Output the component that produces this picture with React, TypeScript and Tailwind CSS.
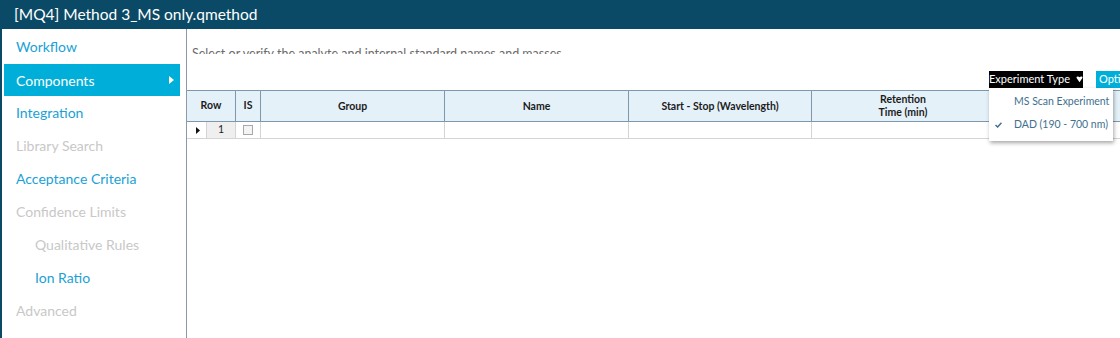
import React from "react";

type NavItem = { label: string; state: "link" | "active" | "disabled"; indent?: boolean };

const nav: NavItem[] = [
  { label: "Workflow", state: "link" },
  { label: "Components", state: "active" },
  { label: "Integration", state: "link" },
  { label: "Library Search", state: "disabled" },
  { label: "Acceptance Criteria", state: "link" },
  { label: "Confidence Limits", state: "disabled" },
  { label: "Qualitative Rules", state: "disabled", indent: true },
  { label: "Ion Ratio", state: "link", indent: true },
  { label: "Advanced", state: "disabled" },
  { label: "Formula Finder", state: "disabled", indent: true },
];

const cols = [
  { label: "Group", w: "w-[184px]" },
  { label: "Name", w: "w-[184px]" },
  { label: "Start - Stop (Wavelength)", w: "w-[183px]" },
  { label: "Retention\nTime (min)", w: "w-[183px]" },
  { label: "", w: "w-[184px]" },
];

function Caret() {
  return (
    <svg width="8" height="7" viewBox="0 0 8 7" className="ml-[6px]">
      <path d="M0.5 1.5 Q0.5 0 2 0 Q3.3 0 4 1 Q4.7 0 6 0 Q7.5 0 7.5 1.5 L4 6.5 Z" fill="white" />
    </svg>
  );
}

export default function App() {
  return (
    <div className="w-[1120px] h-[338px] overflow-hidden bg-white" style={{ fontFamily: "Lato, 'Liberation Sans', sans-serif" }}>
      {/* Title bar */}
      <div className="h-[29px] bg-[#0b4a66] text-white text-[15.5px] pl-[14px] flex items-center leading-none">
        [MQ4] Method 3_MS only.qmethod
      </div>

      <div className="flex h-[309px] border-l-2 border-[#0b4a66]">
        {/* Left navigation */}
        <nav className="w-[185px] shrink-0 border-r border-[#8c99a6] pt-px pl-[2px] pr-[6px]">
          {nav.map((n) => (
            <div
              key={n.label}
              className={`flex items-center text-[14px] ${n.indent ? "pl-[31px]" : "pl-[12px]"} ${
                n.state === "active"
                  ? "bg-[#00afd9] text-white mt-px h-[32px] justify-between pr-[6px]"
                  : n.state === "link"
                  ? "h-[33px] text-[#1ba1d5]"
                  : "h-[33px] text-[#c8c8c8]"
              }`}
            >
              <span>{n.label}</span>
              {n.state === "active" && (
                <svg width="5" height="8" viewBox="0 0 5 8">
                  <path d="M0 0 L5 4 L0 8 Z" fill="white" />
                </svg>
              )}
            </div>
          ))}
        </nav>

        {/* Main */}
        <main className="relative flex-1 overflow-hidden">
          <div className="h-[25px] overflow-hidden pl-[5px] pt-[18px] text-[12.5px] leading-[14px] text-[#6b6b6b] whitespace-nowrap">
            Select or verify the analyte and internal standard names and masses
          </div>

          <div className="h-[36px] flex items-end pb-[2px] pl-[802px] whitespace-nowrap">
            <div className="h-[17px] w-[94px] bg-black text-white text-[11px] flex items-center justify-center shrink-0">
              Experiment Type
              <Caret />
            </div>
            <div className="h-[17px] w-[60px] ml-[13px] bg-[#00afd9] text-white text-[11px] flex items-center pl-[3px] shrink-0">
              Options
            </div>
          </div>

          {/* Grid */}
          <div className="w-[1200px]">
            <div className="flex h-[32px] bg-[#e5f1f9] border-t border-b border-[#7f98ad] text-[10.5px] font-bold text-[#1c1c1c]">
              <div className="w-[49px] flex items-center justify-center border-r border-[#7f98ad]">Row</div>
              <div className="w-[25px] flex items-center justify-center border-r border-[#7f98ad]">IS</div>
              {cols.map((c, i) => (
                <div
                  key={i}
                  className={`${c.w} flex items-center justify-center text-center leading-[13px] whitespace-pre-line border-r border-[#7f98ad]`}
                >
                  {c.label}
                </div>
              ))}
            </div>
            <div className="flex h-[17px] border-b border-[#d4d4d4] text-[10.5px] text-[#222]">
              <div className="w-[20px] flex items-center pl-[9px] border-r border-[#d4d4d4]">
                <svg width="4" height="7" viewBox="0 0 4 7">
                  <path d="M0 0 L4 3.5 L0 7 Z" fill="#111" />
                </svg>
              </div>
              <div className="w-[29px] bg-[#efefef] flex items-center justify-center border-r border-[#d4d4d4]">1</div>
              <div className="w-[25px] flex items-center justify-center border-r border-[#d4d4d4]">
                <div className="w-[10px] h-[10px] border border-[#a8a8a8] bg-[#f4f4f4]" />
              </div>
              {cols.map((c, i) => (
                <div key={i} className={`${c.w} border-r border-[#d4d4d4]`} />
              ))}
            </div>
          </div>

          {/* Experiment type menu */}
          <div className="absolute left-[802px] top-[59px] w-[124px] h-[53px] bg-white shadow-[1px_2px_4px_rgba(0,0,0,0.35)] text-[10.5px] text-[#41708f] whitespace-nowrap">
            <div className="h-[26px] flex items-center pl-[25px] pt-[2px]">MS Scan Experiment</div>
            <div className="h-[22px] flex items-center pl-[6px]">
              <svg width="7" height="6" viewBox="0 0 7 6">
                <path d="M0.5 3 L2.6 5 L6.5 0.8" stroke="#41708f" strokeWidth="1.5" fill="none" />
              </svg>
              <span className="ml-[12px]">DAD (190 - 700 nm)</span>
            </div>
          </div>
        </main>
      </div>
    </div>
  );
}
